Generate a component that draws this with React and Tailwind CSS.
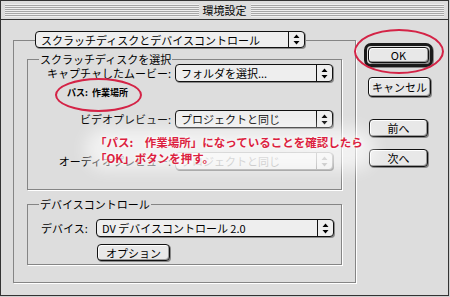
import React from 'react';

// Mac OS 9 style "環境設定" dialog with red annotations

const Arrows = () => (
  <svg width="7" height="11" viewBox="0 0 7 11">
    <path d="M3.5 0.5L6.5 4H0.5z M0.5 7h6L3.5 10.5z" fill="currentColor" />
  </svg>
);

const Popup = ({ children, className = '', disabled = false }) => (
  <div
    className={`flex h-[18px] items-center rounded-[4px] border bg-[#eeeeee] shadow-[1px_1px_0_#8a8a8a] ${
      disabled ? 'border-[#a0a0a0] text-[#a8a8a8]' : 'border-[#111] text-black'
    } ${className}`}
  >
    <span className="flex-1 truncate pl-[5px] text-[11px] leading-[16px]">{children}</span>
    <span
      className={`flex h-full w-[16px] items-center justify-center border-l ${
        disabled ? 'border-[#a0a0a0]' : 'border-[#111]'
      }`}
    >
      <Arrows />
    </span>
  </div>
);

const Button = ({ children, className = '' }) => (
  <div
    className={`flex items-center justify-center rounded-[4px] border border-[#111] bg-[#e8e8e8] text-[11px] leading-[14px] shadow-[inset_-1px_-1px_0_#999,inset_1px_1px_0_#fff,1px_1px_0_#888] ${className}`}
  >
    {children}
  </div>
);

const groupBox = 'border border-[#858585] shadow-[1px_1px_0_#fff]';

const App = () => {
  return (
    <div className="relative h-[297px] w-[450px] bg-[#cfcfcf] font-['Noto_Sans_CJK_JP',sans-serif] text-black">
      <div className="flex h-[296px] w-[449px] flex-col border border-[#333] bg-[#dddddd]">
        {/* title bar */}
        <div className="flex h-[19px] items-center border-b border-[#333] px-[4px]">
          <div className="flex h-[13px] flex-1 items-center justify-center bg-[repeating-linear-gradient(to_bottom,#efefef_0px,#efefef_1px,#a6a6a6_1px,#a6a6a6_2px)]">
            <span className="bg-[#dddddd] px-[4px] text-[11px] leading-[13px]">環境設定</span>
          </div>
        </div>

        {/* body */}
        <div className="flex pl-[12px] pt-[11px]">
          <div className="flex w-[343px] flex-col">
            <Popup className="relative z-10 -mb-[8px] ml-[22px] !h-[17px] w-[270px]">
              スクラッチディスクとデバイスコントロール
            </Popup>

            <div className={`h-[243px] px-[13px] pt-[13px] ${groupBox}`}>
              <fieldset className={`pb-[19px] ${groupBox}`}>
                <legend className="ml-[11px] px-[1px] text-[11px] leading-[10px]">
                  スクラッチディスクを選択
                </legend>
                <div className="flex items-center">
                  <span className="w-[143px] text-right text-[11px] leading-[14px]">キャプチャしたムービー:</span>
                  <Popup className="ml-[4px] w-[158px]">フォルダを選択...</Popup>
                </div>
                <div className="mt-[5px] pl-[39px] text-[9px] font-bold leading-[12px]">パス:&nbsp; 作業場所</div>
                <div className="mt-[11px] flex items-center">
                  <span className="w-[143px] text-right text-[11px] leading-[14px]">ビデオプレビュー:</span>
                  <Popup className="ml-[4px] w-[158px]">プロジェクトと同じ</Popup>
                </div>
                <div className="mt-[24px] flex items-center">
                  <span className="w-[143px] text-right text-[11px] leading-[14px]">オーディオプレビュー:</span>
                  <Popup disabled className="ml-[4px] w-[158px]">プロジェクトと同じ</Popup>
                </div>
              </fieldset>

              <fieldset className={`mt-[9px] pb-[3px] ${groupBox}`}>
                <legend className="ml-[11px] px-[1px] text-[11px] leading-[10px]">デバイスコントロール</legend>
                <div className="mt-[10px] flex items-center pl-[13px]">
                  <span className="w-[55px] text-[11px] leading-[14px]">デバイス:</span>
                  <Popup className="w-[238px]">DV デバイスコントロール 2.0</Popup>
                </div>
                <Button className="ml-[69px] mt-[7px] h-[17px] w-[73px]">オプション</Button>
              </fieldset>
            </div>
          </div>

          {/* right buttons */}
          <div className="ml-[8px] flex flex-col pt-[12px]">
            <div className="h-[24px] w-[69px] rounded-[7px] border-[3px] border-[#1a1a1a] bg-[#dddddd] p-[1px] shadow-[1px_1px_0_#888]">
              <Button className="h-full w-full">OK</Button>
            </div>
            <Button className="ml-[4px] mt-[10px] h-[20px] w-[63px]">キャンセル</Button>
            <Button className="ml-[5px] mt-[22px] h-[18px] w-[59px]">前へ</Button>
            <Button className="ml-[5px] mt-[12px] h-[18px] w-[59px]">次へ</Button>
          </div>
        </div>
      </div>

      {/* annotations */}
      <div className="absolute left-[85px] top-[128px] h-[42px] w-[290px] rounded-full bg-white/60 blur-[8px]" />
      <div className="absolute left-[95px] top-[134px] text-[11.5px] font-bold leading-[16px] text-[#dc1f40] [text-shadow:0_0_3px_#fff,0_0_6px_#fff]">
        <div>「パス:　作業場所」になっていることを確認したら</div>
        <div>「OK」ボタンを押す。</div>
      </div>
      <div className="absolute left-[55px] top-[78px] h-[34px] w-[87px] rounded-[50%] border-2 border-[#d42346]" />
      <div className="absolute left-[354px] top-[29px] h-[45px] w-[90px] rounded-[50%] border-2 border-[#d42346]" />
    </div>
  );
};

export default App;
